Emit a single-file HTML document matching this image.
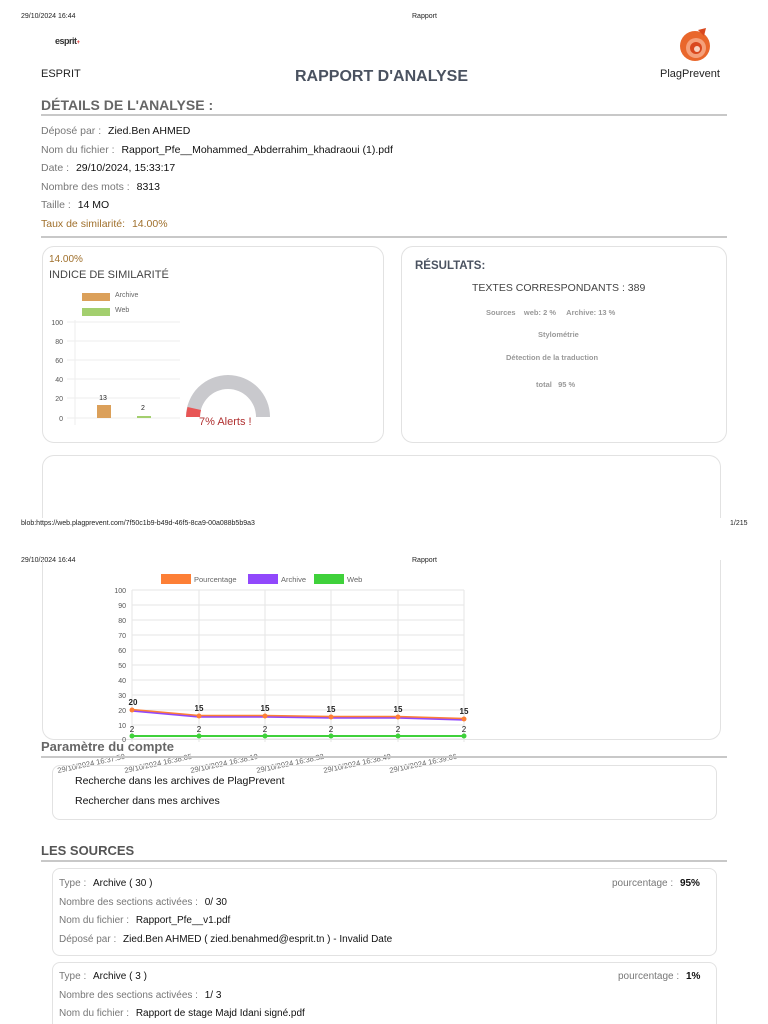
<!DOCTYPE html>
<html><head><meta charset="utf-8"><style>
*{margin:0;padding:0;box-sizing:border-box}
html,body{width:768px;height:1024px;overflow:hidden}
body{position:relative;background:#fff;font-family:"Liberation Sans","DejaVu Sans",sans-serif;color:#222}
svg{overflow:visible}
.a{position:absolute;white-space:nowrap}
.sm{font-size:7px;color:#222}
.box{position:absolute;border:1px solid #e2e2e2;border-radius:12px}
.hr{position:absolute;height:2px;background:#c8c8c8}
.row{font-size:10.5px;color:#777}
.row b{color:#111;font-weight:normal;margin-left:4px}
</style></head><body>
<div class="a sm" style="left:21px;top:13px">29/10/2024 16:44</div>
<div class="a sm" style="left:412px;top:13px">Rapport</div>
<div class="a" style="left:55px;top:36px;font-size:9px;font-weight:bold;color:#333;letter-spacing:-0.5px">esprit<span style="color:#d33;font-size:6px">+</span></div>
<svg class="a" style="left:676px;top:26px" width="38" height="38" viewBox="0 0 38 38">
<circle cx="19" cy="20" r="15" fill="#e9672c"/><circle cx="20" cy="22" r="10" fill="#f5a07a"/><circle cx="20" cy="22" r="6" fill="#d9481e"/><circle cx="21" cy="23" r="3" fill="#f7d2c0"/><path d="M22 4 L30 2 L28 10 Z" fill="#d9481e"/></svg>
<div class="a" style="left:41px;top:68px;font-size:11px">ESPRIT</div>
<div class="a" style="left:295px;top:68px;font-size:16px;font-weight:bold;color:#4a5260">RAPPORT D'ANALYSE</div>
<div class="a" style="left:660px;top:68px;font-size:11px">PlagPrevent</div>
<div class="a" style="left:41px;top:97px;font-size:14px;font-weight:bold;color:#666">DÉTAILS DE L'ANALYSE :</div>
<div class="hr" style="left:41px;top:114px;width:686px"></div>
<div class="a row" style="left:41px;top:125px">Déposé par : <b>Zied.Ben AHMED</b></div>
<div class="a row" style="left:41px;top:144px">Nom du fichier : <b>Rapport_Pfe__Mohammed_Abderrahim_khadraoui (1).pdf</b></div>
<div class="a row" style="left:41px;top:162px">Date : <b>29/10/2024, 15:33:17</b></div>
<div class="a row" style="left:41px;top:181px">Nombre des mots : <b>8313</b></div>
<div class="a row" style="left:41px;top:199px">Taille : <b>14 MO</b></div>
<div class="a row" style="left:41px;top:218px;color:#a0702c">Taux de similarité: <span style="margin-left:4px">14.00%</span></div>
<div class="hr" style="left:41px;top:236px;width:686px"></div>

<div class="box" style="left:42px;top:246px;width:342px;height:197px"></div>
<div class="a" style="left:49px;top:254px;font-size:10px;color:#a0702c">14.00%</div>
<div class="a" style="left:49px;top:269px;font-size:11px;color:#444">INDICE DE SIMILARITÉ</div>
<div class="a" style="left:82px;top:293px;width:28px;height:8px;background:#dba05a"></div>
<div class="a sm" style="left:115px;top:292px;color:#666">Archive</div>
<div class="a" style="left:82px;top:308px;width:28px;height:8px;background:#a3cf6e"></div>
<div class="a sm" style="left:115px;top:307px;color:#666">Web</div>
<svg class="a" style="left:40px;top:315px" width="130" height="115">
<g stroke="#eee" stroke-width="1">
<line x1="27" y1="7" x2="140" y2="7"/><line x1="27" y1="26" x2="140" y2="26"/><line x1="27" y1="45" x2="140" y2="45"/><line x1="27" y1="64" x2="140" y2="64"/><line x1="27" y1="83" x2="140" y2="83"/><line x1="27" y1="103" x2="140" y2="103"/><line x1="35" y1="5" x2="35" y2="110"/></g>
<g font-size="7" fill="#555" font-family="Liberation Sans">
<text x="23" y="10" text-anchor="end">100</text><text x="23" y="29" text-anchor="end">80</text><text x="23" y="48" text-anchor="end">60</text><text x="23" y="67" text-anchor="end">40</text><text x="23" y="86" text-anchor="end">20</text><text x="23" y="106" text-anchor="end">0</text>
<text x="63" y="85" text-anchor="middle" fill="#222">13</text><text x="103" y="95" text-anchor="middle" fill="#222">2</text></g>
<rect x="57" y="90" width="14" height="13" fill="#dba05a"/><rect x="97" y="101" width="14" height="2" fill="#a3cf6e"/>
</svg>
<svg class="a" style="left:180px;top:370px" width="100" height="52">
<path d="M6 47 A42 42 0 0 1 90 47 L76 47 A28 28 0 0 0 20 47 Z" fill="#c9c9cd"/>
<path d="M6 47 A42 42 0 0 1 7.5 37 L21 40 A28 28 0 0 0 20 47 Z" fill="#e85555"/>
</svg>
<div class="a" style="left:199px;top:416px;font-size:11px;color:#b03030">7% Alerts !</div>

<div class="box" style="left:401px;top:246px;width:326px;height:197px"></div>
<div class="a" style="left:415px;top:260px;font-size:11.5px;font-weight:bold;color:#4a5260">RÉSULTATS:</div>
<div class="a" style="left:472px;top:282px;font-size:10.5px;color:#444">TEXTES CORRESPONDANTS : 389</div>
<div class="a" style="left:486px;top:308px;font-size:7.5px;color:#999;font-weight:bold">Sources &nbsp;&nbsp; web: 2 % &nbsp;&nbsp;&nbsp; Archive: 13 %</div>
<div class="a" style="left:538px;top:330px;font-size:7.5px;color:#999;font-weight:bold">Stylométrie</div>
<div class="a" style="left:506px;top:353px;font-size:7.5px;color:#999;font-weight:bold">Détection de la traduction</div>
<div class="a" style="left:536px;top:380px;font-size:7.5px;color:#999;font-weight:bold">total &nbsp; 95 %</div>

<div class="box" style="left:42px;top:455px;width:679px;height:100px;border-bottom:none;border-radius:12px 12px 0 0"></div>
<div class="a" style="left:0;top:518px;width:768px;height:42px;background:#fff"></div>
<div class="a sm" style="left:21px;top:520px">blob:https://web.plagprevent.com/7f50c1b9-b49d-46f5-8ca9-00a088b5b9a3</div>
<div class="a sm" style="left:730px;top:520px">1/215</div>
<div class="a sm" style="left:21px;top:557px">29/10/2024 16:44</div>
<div class="a sm" style="left:412px;top:557px">Rapport</div>

<div class="box" style="left:42px;top:560px;width:679px;height:180px;border-top:none;border-radius:0 0 12px 12px"></div>
<svg class="a" style="left:100px;top:570px" width="400" height="205" font-family="Liberation Sans">
<rect x="61" y="4" width="30" height="10" fill="#fd7f36"/><text x="94" y="12" font-size="7.5" fill="#666">Pourcentage</text>
<rect x="148" y="4" width="30" height="10" fill="#9148fc"/><text x="181" y="12" font-size="7.5" fill="#666">Archive</text>
<rect x="214" y="4" width="30" height="10" fill="#3fd13b"/><text x="247" y="12" font-size="7.5" fill="#666">Web</text>
<g stroke="#e6e6e6" stroke-width="1">
<line x1="32" y1="20" x2="364" y2="20"/><line x1="32" y1="35" x2="364" y2="35"/><line x1="32" y1="50" x2="364" y2="50"/><line x1="32" y1="65" x2="364" y2="65"/><line x1="32" y1="80" x2="364" y2="80"/><line x1="32" y1="95" x2="364" y2="95"/><line x1="32" y1="110" x2="364" y2="110"/><line x1="32" y1="125" x2="364" y2="125"/><line x1="32" y1="140" x2="364" y2="140"/><line x1="32" y1="155" x2="364" y2="155"/><line x1="32" y1="169" x2="364" y2="169"/>
<line x1="32" y1="20" x2="32" y2="172"/><line x1="99" y1="20" x2="99" y2="172"/><line x1="165" y1="20" x2="165" y2="172"/><line x1="231" y1="20" x2="231" y2="172"/><line x1="298" y1="20" x2="298" y2="172"/><line x1="364" y1="20" x2="364" y2="172"/></g>
<g font-size="7" fill="#555" text-anchor="end">
<text x="26" y="23">100</text><text x="26" y="38">90</text><text x="26" y="53">80</text><text x="26" y="68">70</text><text x="26" y="83">60</text><text x="26" y="98">50</text><text x="26" y="113">40</text><text x="26" y="128">30</text><text x="26" y="143">20</text><text x="26" y="158">10</text><text x="26" y="172">0</text></g>
<polyline points="32,140 99,146 165,146 231,147 298,147 364,149" fill="none" stroke="#fd7f36" stroke-width="2.5"/>
<polyline points="32,141 99,147 165,147 231,148 298,148 364,150" fill="none" stroke="#9148fc" stroke-width="1.5"/>
<polyline points="32,166 99,166 165,166 231,166 298,166 364,166" fill="none" stroke="#3fd13b" stroke-width="2"/>
<g fill="#fd7f36"><circle cx="32" cy="140" r="2.5"/><circle cx="99" cy="146" r="2.5"/><circle cx="165" cy="146" r="2.5"/><circle cx="231" cy="147" r="2.5"/><circle cx="298" cy="147" r="2.5"/><circle cx="364" cy="149" r="2.5"/></g>
<g fill="#3fd13b"><circle cx="32" cy="166" r="2.5"/><circle cx="99" cy="166" r="2.5"/><circle cx="165" cy="166" r="2.5"/><circle cx="231" cy="166" r="2.5"/><circle cx="298" cy="166" r="2.5"/><circle cx="364" cy="166" r="2.5"/></g>
<g font-size="8" fill="#222" text-anchor="middle" font-weight="bold">
<text x="33" y="135">20</text><text x="99" y="141">15</text><text x="165" y="141">15</text><text x="231" y="142">15</text><text x="298" y="142">15</text><text x="364" y="144">15</text></g>
<g font-size="8" fill="#222" text-anchor="middle">
<text x="32" y="162">2</text><text x="99" y="162">2</text><text x="165" y="162">2</text><text x="231" y="162">2</text><text x="298" y="162">2</text><text x="364" y="162">2</text></g>
<g font-size="7.5" fill="#666">
<text transform="translate(-42,203) rotate(-12)">29/10/2024 16:37:50</text>
<text transform="translate(25,203) rotate(-12)">29/10/2024 16:38:05</text>
<text transform="translate(91,203) rotate(-12)">29/10/2024 16:38:19</text>
<text transform="translate(157,203) rotate(-12)">29/10/2024 16:38:32</text>
<text transform="translate(224,203) rotate(-12)">29/10/2024 16:38:49</text>
<text transform="translate(290,203) rotate(-12)">29/10/2024 16:39:06</text></g>
</svg>
<div class="a" style="left:41px;top:739px;font-size:13px;font-weight:bold;color:#666">Paramètre du compte</div>
<div class="hr" style="left:41px;top:756px;width:686px"></div>
<div class="box" style="left:52px;top:765px;width:665px;height:55px;border-radius:8px"></div>
<div class="a" style="left:75px;top:775px;font-size:10.5px;color:#111">Recherche dans les archives de PlagPrevent</div>
<div class="a" style="left:75px;top:795px;font-size:10.5px;color:#111">Rechercher dans mes archives</div>

<div class="a" style="left:41px;top:843px;font-size:13px;font-weight:bold;color:#555">LES SOURCES</div>
<div class="hr" style="left:41px;top:860px;width:686px"></div>
<div class="box" style="left:52px;top:868px;width:665px;height:88px;border-radius:8px"></div>
<div class="a row" style="left:59px;top:878px;font-size:10px">Type : <b>Archive ( 30 )</b></div>
<div class="a row" style="left:612px;top:878px;font-size:10px">pourcentage : <b style="font-weight:bold">95%</b></div>
<div class="a row" style="left:59px;top:897px;font-size:10px">Nombre des sections activées : <b>0/ 30</b></div>
<div class="a row" style="left:59px;top:915px;font-size:10px">Nom du fichier : <b>Rapport_Pfe__v1.pdf</b></div>
<div class="a row" style="left:59px;top:934px;font-size:10px">Déposé par : <b>Zied.Ben AHMED ( zied.benahmed@esprit.tn ) - Invalid Date</b></div>
<div class="box" style="left:52px;top:962px;width:665px;height:80px;border-radius:8px"></div>
<div class="a row" style="left:59px;top:971px;font-size:10px">Type : <b>Archive ( 3 )</b></div>
<div class="a row" style="left:618px;top:971px;font-size:10px">pourcentage : <b style="font-weight:bold">1%</b></div>
<div class="a row" style="left:59px;top:990px;font-size:10px">Nombre des sections activées : <b>1/ 3</b></div>
<div class="a row" style="left:59px;top:1008px;font-size:10px">Nom du fichier : <b>Rapport de stage Majd Idani signé.pdf</b></div>
</body></html>
